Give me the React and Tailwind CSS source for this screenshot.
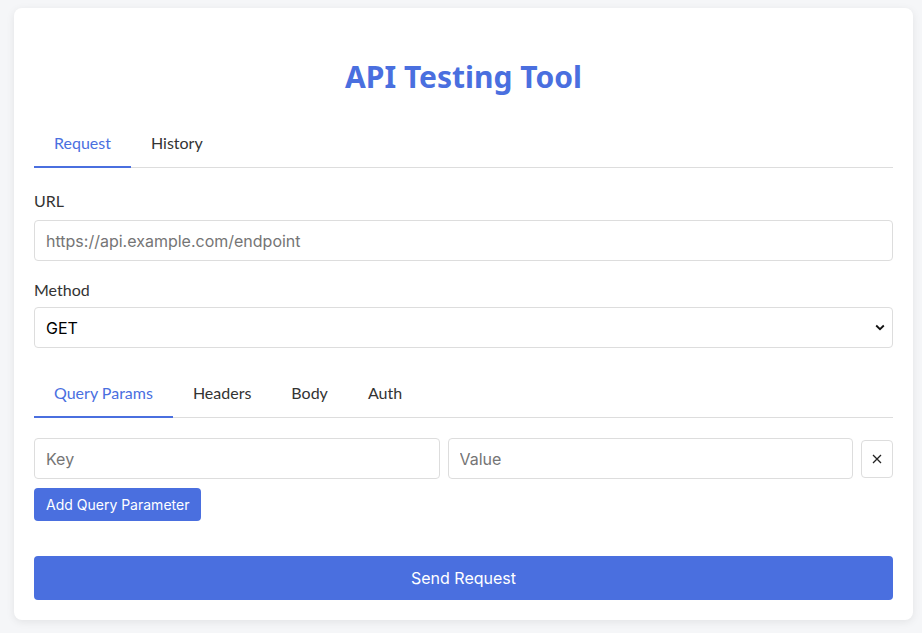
import React, { useState } from 'react'

const humanist = "font-['Lato',sans-serif]"
const titleFont = "font-['Noto_Sans',sans-serif]"
const ui = "font-['Inter',sans-serif]"

function Tabs({ items, active, onChange }) {
  return (
    <div className="flex border-b border-[#dddddd]">
      {items.map(item => (
        <button
          key={item}
          onClick={() => onChange(item)}
          className={`${humanist} px-5 pt-3 pb-[11px] -mb-px text-base leading-6 border-b-2 ${
            active === item ? 'border-[#4a6fdf] text-[#4a6fdf]' : 'border-transparent text-[#333333]'
          }`}
        >
          {item}
        </button>
      ))}
    </div>
  )
}

export default function App() {
  const [tab, setTab] = useState('Request')
  const [sub, setSub] = useState('Query Params')
  const [params, setParams] = useState([{ key: '', value: '' }])

  return (
    <div className="min-h-screen bg-[#f5f6f8] pt-2 pl-[14px]">
      <div className="w-[899px] h-[612px] bg-white rounded-lg shadow-[0_2px_8px_rgba(0,0,0,0.08)] p-5">
        <h1 className={`${titleFont} text-center text-[30px] leading-9 font-bold text-[#4a6fdf] mt-[31px] mb-[24px]`}>
          API Testing Tool
        </h1>

        <Tabs items={['Request', 'History']} active={tab} onChange={setTab} />

        <label className={`${humanist} block mt-[21px] mb-[7px] text-base leading-6 text-[#333333]`}>URL</label>
        <input
          type="text"
          placeholder="https://api.example.com/endpoint"
          className={`${ui} w-full h-[41px] px-[11px] border border-[#dddddd] rounded text-base text-black placeholder-[#757575] focus:outline-none`}
        />

        <label className={`${humanist} block mt-[17px] mb-[5px] text-base leading-6 text-[#333333]`}>Method</label>
        <div className="relative">
          <select className={`${ui} w-full h-[41px] px-[11px] border border-[#dddddd] rounded text-base text-black bg-white appearance-none focus:outline-none`}>
            <option>GET</option>
            <option>POST</option>
            <option>PUT</option>
            <option>DELETE</option>
          </select>
          <svg className="absolute right-[8px] top-[17px] pointer-events-none" width="10" height="7" viewBox="0 0 10 7">
            <path d="M1.2 1.5 L5 5.2 L8.8 1.5" fill="none" stroke="#111" strokeWidth="1.8" />
          </svg>
        </div>

        <div className="mt-[21px]">
          <Tabs items={['Query Params', 'Headers', 'Body', 'Auth']} active={sub} onChange={setSub} />
        </div>

        <div className="mt-5">
          {params.map((p, i) => (
            <div key={i} className="flex items-center gap-2 mb-[9px]">
              <input
                placeholder="Key"
                className={`${ui} flex-1 min-w-0 h-[41px] px-[11px] border border-[#dddddd] rounded text-base placeholder-[#757575] focus:outline-none`}
              />
              <input
                placeholder="Value"
                className={`${ui} flex-1 min-w-0 h-[41px] px-[11px] border border-[#dddddd] rounded text-base placeholder-[#757575] focus:outline-none`}
              />
              <button
                onClick={() => setParams(params.filter((_, j) => j !== i))}
                className="w-8 h-[38px] flex items-center justify-center border border-[#dddddd] rounded bg-white"
              >
                <svg width="10" height="10" viewBox="0 0 10 10">
                  <path d="M1 1 L9 9 M9 1 L1 9" stroke="#222" strokeWidth="1.3" />
                </svg>
              </button>
            </div>
          ))}
          <button
            onClick={() => setParams([...params, { key: '', value: '' }])}
            className={`${ui} h-[33px] px-3 rounded bg-[#4a6fdf] text-white text-sm`}
          >
            Add Query Parameter
          </button>
        </div>

        <button className={`${ui} w-full h-[44px] mt-[35px] rounded bg-[#4a6fdf] text-white text-base`}>
          Send Request
        </button>
      </div>
    </div>
  )
}
